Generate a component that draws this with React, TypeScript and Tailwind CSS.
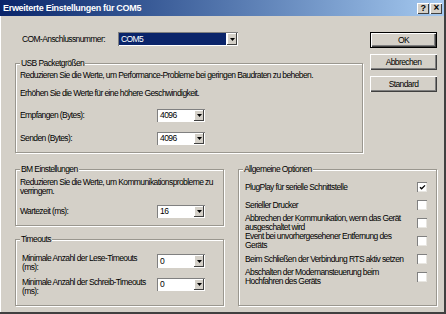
import React from "react";

function Arrow() {
  return (
    <svg width="5" height="3" viewBox="0 0 5 3">
      <path d="M0 0h5L2.5 3z" fill="#000" />
    </svg>
  );
}

function Combo({ value, w = "w-[48px]", selected = false }: { value: string; w?: string; selected?: boolean }) {
  return (
    <div className={`flex h-[13px] shrink-0 bg-white p-px shadow-[inset_1px_1px_0_#808080,inset_-1px_-1px_0_#fff] ${w}`}>
      <div className={`flex flex-1 items-center pl-[2px] leading-none ${selected ? "bg-[#0a246a] text-white" : "text-black"}`}>{value}</div>
      <div className="ml-px flex w-[10px] items-center justify-center bg-[#d4d0c8] shadow-[inset_-1px_-1px_0_#404040,inset_1px_1px_0_#fff]">
        <Arrow />
      </div>
    </div>
  );
}

function Check({ checked = false }: { checked?: boolean }) {
  return (
    <div className="flex h-[10px] w-[10px] shrink-0 items-center justify-center bg-white shadow-[inset_1px_1px_0_#808080,inset_-1px_-1px_0_#e8e6e1]">
      {checked && (
        <svg width="7" height="7" viewBox="0 0 7 7">
          <path d="M1 3.2L2.6 4.8L6 1.4" stroke="#000" strokeWidth="1.3" fill="none" />
        </svg>
      )}
    </div>
  );
}

function Btn({ children, def = false }: { children: React.ReactNode; def?: boolean }) {
  return (
    <div
      className={`flex h-[16px] items-center justify-center bg-[#d4d0c8] leading-none text-black shadow-[inset_1px_1px_0_#fff,inset_-1px_-1px_0_#404040,inset_-2px_-2px_0_#808080] ${def ? "border border-black" : ""}`}
    >
      {children}
    </div>
  );
}

function Group({ title, className = "", children }: { title: string; className?: string; children: React.ReactNode }) {
  return (
    <fieldset className={`border border-[#9a978f] px-[4px] shadow-[inset_1px_1px_0_#fff,1px_1px_0_#fff] ${className}`}>
      <legend className="bg-[#d4d0c8] px-[1px] leading-[10px]">{title}</legend>
      {children}
    </fieldset>
  );
}

function OptRow({ children, checked = false }: { children: React.ReactNode; checked?: boolean }) {
  return (
    <div className="flex h-[18px] items-center justify-between pl-[2px] pr-[4px]">
      <div className="leading-[9px]">{children}</div>
      <Check checked={checked} />
    </div>
  );
}

export default function App() {
  return (
    <div className="h-[314px] w-[446px] overflow-hidden whitespace-nowrap bg-[#d4d0c8] text-[8.5px] tracking-[-0.6px] text-black [font-family:'Liberation_Sans',Arial,sans-serif] border-r-2 border-b-2 border-r-[#404040] border-b-[#404040] shadow-[inset_1px_1px_0_#fff]">
      {/* Title bar */}
      <div className="flex h-[16px] items-center justify-between bg-gradient-to-r from-[#0a246a] to-[#a6caf0] pl-[3px] pr-[2px]">
        <span className="text-[9px] font-bold leading-none tracking-[-0.3px] text-white">Erweiterte Einstellungen für COM5</span>
        <div className="flex gap-[1px]">
          <div className="flex h-[11px] w-[12px] items-center justify-center bg-[#d4d0c8] text-[9px] font-bold leading-none shadow-[inset_1px_1px_0_#fff,inset_-1px_-1px_0_#404040]">?</div>
          <div className="flex h-[11px] w-[12px] items-center justify-center bg-[#d4d0c8] text-[10px] font-bold leading-none shadow-[inset_1px_1px_0_#fff,inset_-1px_-1px_0_#404040]">×</div>
        </div>
      </div>

      {/* Top section */}
      <div className="flex gap-[7px] pl-[15px] pt-[16px]">
        <div className="w-[348px]">
          <div className="flex h-[14px] items-center pl-[7px]">
            <span className="w-[96px] leading-none">COM-Anschlussnummer:</span>
            <Combo value="COM5" w="w-[120px] h-[14px]" selected />
          </div>
          <Group title="USB Packetgrößen" className="mt-[12px] pb-[7px] pt-[2px]">
            <div className="leading-[10px]">Reduzieren Sie die Werte, um Performance-Probleme bei geringen Baudraten zu beheben.</div>
            <div className="mt-[8px] leading-[10px]">Erhöhen Sie die Werte für eine höhere Geschwindigkeit.</div>
            <div className="mt-[11px] flex items-center">
              <span className="w-[137px] leading-none">Empfangen (Bytes):</span>
              <Combo value="4096" />
            </div>
            <div className="mt-[10px] flex items-center">
              <span className="w-[137px] leading-none">Senden (Bytes):</span>
              <Combo value="4096" />
            </div>
          </Group>
        </div>
        <div className="flex w-[67px] flex-col gap-[6px]">
          <Btn def>OK</Btn>
          <Btn>Abbrechen</Btn>
          <Btn>Standard</Btn>
        </div>
      </div>

      {/* Bottom section */}
      <div className="mt-[11px] flex gap-[14px] pl-[15px]">
        <div className="flex w-[209px] flex-col gap-[8px]">
          <Group title="BM Einstellungen" className="pb-[7px] pt-[4px]">
            <div className="leading-[9px]">
              Reduzieren Sie die Werte, um Kommunikationsprobleme zu
              <br />
              verringern.
            </div>
            <div className="mt-[9px] flex items-center">
              <span className="w-[137px] leading-none">Wartezeit (ms):</span>
              <Combo value="16" />
            </div>
          </Group>
          <Group title="Timeouts" className="pb-[9px] pt-[10px]">
            <div className="flex items-start">
              <span className="w-[137px] pl-[2px] leading-[9px]">
                Minimale Anzahl der Lese-Timeouts
                <br />
                (ms):
              </span>
              <Combo value="0" w="w-[48px] h-[14px]" />
            </div>
            <div className="mt-[6px] flex items-start">
              <span className="w-[137px] pl-[2px] leading-[9px]">
                Minimale Anzahl der Schreib-Timeouts
                <br />
                (ms):
              </span>
              <Combo value="0" />
            </div>
          </Group>
        </div>
        <Group title="Allgemeine Optionen" className="w-[199px] pt-[4px]">
          <div className="pr-[1px]">
            <OptRow checked>PlugPlay für serielle Schnittstelle</OptRow>
            <OptRow>Serieller Drucker</OptRow>
            <OptRow>
              Abbrechen der Kommunikation, wenn das Gerät
              <br />
              ausgeschaltet wird
            </OptRow>
            <OptRow>
              Event bei unvorhergesehener Entfernung des
              <br />
              Geräts
            </OptRow>
            <OptRow>Beim Schließen der Verbindung RTS aktiv setzen</OptRow>
            <OptRow>
              Abschalten der Modemansteuerung beim
              <br />
              Hochfahren des Geräts
            </OptRow>
          </div>
        </Group>
      </div>
    </div>
  );
}
